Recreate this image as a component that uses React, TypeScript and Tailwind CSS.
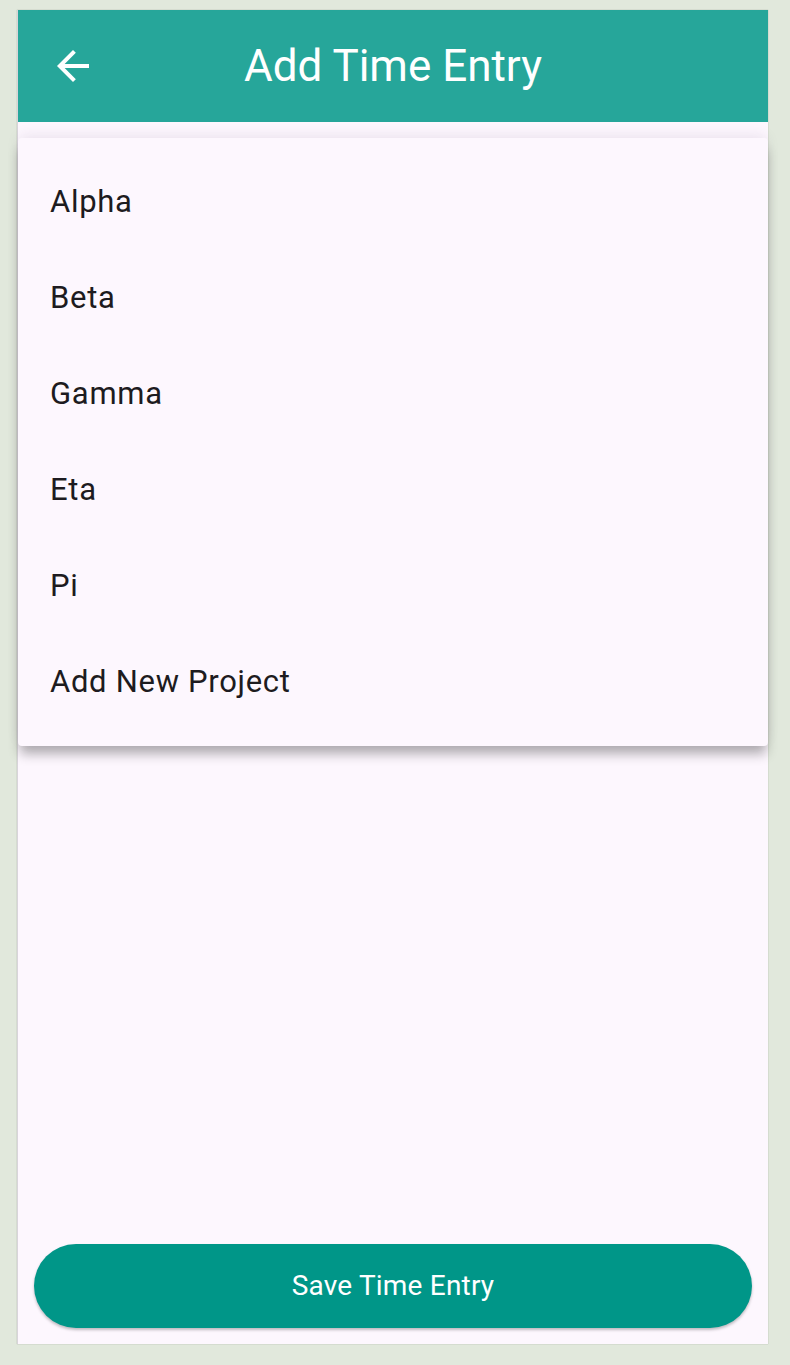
export default function App() {
    const projects = ["Alpha", "Beta", "Gamma", "Eta", "Pi", "Add New Project"]

    return (
        <div className="min-h-screen bg-[#e1e8dc] pt-[10px] pl-[17px] font-['Roboto',sans-serif]">
            <div className="w-[751px] h-[1334px] bg-[#fdf7fe] flex flex-col border-l border-[#d8d4da] shadow-[0_0_1px_rgba(0,0,0,0.3)]">
                <header className="h-[112px] bg-[#26a69a] flex items-center relative shrink-0">
                    <button className="ml-[31px] w-[48px] h-[48px] text-white">
                        <svg viewBox="0 0 24 24" width="48" height="48" fill="currentColor">
                            <path d="M20 11H7.83l5.59-5.59L12 4l-8 8 8 8 1.41-1.41L7.83 13H20v-2z" />
                        </svg>
                    </button>
                    <h1 className="absolute left-0 right-0 text-center text-white text-[44px] leading-none pointer-events-none">
                        Add Time Entry
                    </h1>
                </header>

                <div className="mt-[16px] bg-[#fdf7fe] rounded-[4px] py-[16px] shadow-[0_10px_12px_-2px_rgba(0,0,0,0.3),0_-4px_14px_-2px_rgba(60,30,80,0.10)]">
                    {projects.map((p) => (
                        <div key={p} className="h-[96px] flex items-center px-[32px] text-[31px] tracking-[0.7px] text-[#1d1b20]">
                            {p}
                        </div>
                    ))}
                </div>

                <div className="flex-1" />

                <div className="px-[16px] pb-[16px]">
                    <button className="w-full h-[84px] rounded-full bg-[#009688] text-white text-[28px] font-normal tracking-[0.2px] shadow-[0_2px_3px_rgba(0,0,0,0.25)]">
                        Save Time Entry
                    </button>
                </div>
            </div>
        </div>
    )
}
